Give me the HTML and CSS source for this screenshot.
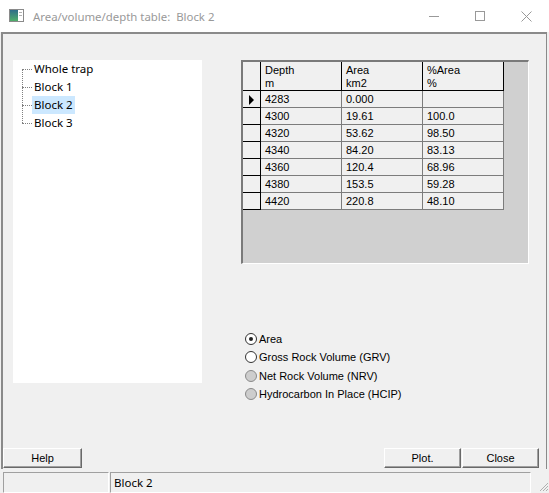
FILE: index.html
```html
<!DOCTYPE html>
<html lang="en">
<head>
    <meta charset="UTF-8">
    <title>Area/volume/depth table: Block 2</title>
    <link rel="stylesheet" href="styles.css">
</head>
<body>
    <div class="window">
        <div class="titlebar">
            <svg class="app-icon" width="15" height="13" viewBox="0 0 15 13">
                <defs>
                    <linearGradient id="ig" x1="0" y1="0" x2="0" y2="1">
                        <stop offset="0" stop-color="#2f6d8a"/>
                        <stop offset="1" stop-color="#4fae6a"/>
                    </linearGradient>
                </defs>
                <rect x="0.5" y="0.5" width="14" height="12" fill="#fff" stroke="#8a8a8a"/>
                <rect x="1" y="1" width="8" height="11" fill="url(#ig)"/>
                <rect x="10" y="3" width="3" height="1" fill="#b0b0b0"/>
                <rect x="10" y="6" width="3" height="1" fill="#b0b0b0"/>
            </svg>
            <span class="title">Area/volume/depth table:&nbsp; Block 2</span>
            <div class="controls">
                <div class="ctl"><svg width="10" height="10" viewBox="0 0 10 10"><path d="M0 5.5H10" stroke="#999" stroke-width="1"/></svg></div>
                <div class="ctl"><svg width="10" height="10" viewBox="0 0 10 10"><rect x="0.5" y="0.5" width="9" height="9" fill="none" stroke="#999"/></svg></div>
                <div class="ctl"><svg width="11" height="11" viewBox="0 0 11 11"><path d="M0.5 0.5L10.5 10.5M10.5 0.5L0.5 10.5" stroke="#999" stroke-width="1"/></svg></div>
            </div>
        </div>

        <div class="form">
            <div class="main">
                <div class="tree">
                    <div class="tree-lines"></div>
                    <div class="tree-item"><span class="label">Whole trap</span></div>
                    <div class="tree-item"><span class="label">Block 1</span></div>
                    <div class="tree-item selected"><span class="label">Block 2</span></div>
                    <div class="tree-item"><span class="label">Block 3</span></div>
                </div>

                <div class="right">
                    <div class="grid">
                        <table class="table">
                            <colgroup>
                                <col style="width:18px">
                                <col style="width:81px">
                                <col style="width:81px">
                                <col style="width:81px">
                            </colgroup>
                            <tr class="head">
                                <td class="fixed"></td>
                                <td class="fixed">Depth<br>m</td>
                                <td class="fixed">Area<br>km2</td>
                                <td class="fixed">%Area<br>%</td>
                            </tr>
                            <tr><td class="fixed"><span class="pointer"></span></td><td>4283</td><td>0.000</td><td></td></tr>
                            <tr><td class="fixed"></td><td>4300</td><td>19.61</td><td>100.0</td></tr>
                            <tr><td class="fixed"></td><td>4320</td><td>53.62</td><td>98.50</td></tr>
                            <tr><td class="fixed"></td><td>4340</td><td>84.20</td><td>83.13</td></tr>
                            <tr><td class="fixed"></td><td>4360</td><td>120.4</td><td>68.96</td></tr>
                            <tr><td class="fixed"></td><td>4380</td><td>153.5</td><td>59.28</td></tr>
                            <tr><td class="fixed"></td><td>4420</td><td>220.8</td><td>48.10</td></tr>
                        </table>
                    </div>

                    <div class="options">
                        <div class="opt"><span class="radio on"></span>Area</div>
                        <div class="opt"><span class="radio"></span>Gross Rock Volume (GRV)</div>
                        <div class="opt"><span class="radio off"></span>Net Rock Volume (NRV)</div>
                        <div class="opt"><span class="radio off"></span>Hydrocarbon In Place (HCIP)</div>
                    </div>
                </div>
            </div>

            <div class="buttons">
                <button class="btn btn-help">Help</button>
                <div class="spacer"></div>
                <button class="btn">Plot.</button>
                <button class="btn">Close</button>
            </div>
        </div>

        <div class="statusbar">
            <div class="panel panel-first"></div>
            <div class="panel panel-text">Block 2</div>
            <svg class="grip" width="11" height="11" viewBox="0 0 11 11">
                <path d="M10 2L2 10M10 5L5 10M10 8L8 10" stroke="#b0b0b0" stroke-width="1"/>
            </svg>
        </div>
    </div>
</body>
</html>
```

FILE: styles.css
```css
body {
    margin: 0;
    width: 549px;
    height: 493px;
    overflow: hidden;
    background-color: #f0f0f0;
    font-family: "Liberation Sans", Arial, sans-serif;
    font-size: 11px;
    color: #000;
}
.window {
    height: 493px;
    display: flex;
    flex-direction: column;
}
.titlebar {
    height: 32px;
    flex-shrink: 0;
    background-color: #fff;
    display: flex;
    align-items: center;
}
.app-icon {
    margin-left: 9px;
    margin-top: -1px;
}
.title {
    flex: 1;
    margin-left: 9px;
    font-family: "Noto Sans", sans-serif;
    font-size: 11.4px;
    color: #999;
}
.controls {
    display: flex;
    height: 32px;
}
.ctl {
    width: 46px;
    height: 32px;
    display: flex;
    align-items: center;
    justify-content: center;
}

/* dialog body */
.form {
    flex: 1;
    margin: 0 2px 0 1px;
    border-top: 2px solid #8a8a8a;
    border-left: 2px solid #8a8a8a;
    border-right: 1px solid #8a8a8a;
    display: flex;
    flex-direction: column;
}
.main {
    display: flex;
    padding: 26px 0 0 10px;
}
.tree {
    position: relative;
    width: 189px;
    height: 323px;
    background-color: #fff;
    font-family: "Noto Sans", sans-serif;
    font-size: 11.5px;
}
.tree-lines {
    position: absolute;
    left: 9px;
    top: 9px;
    height: 54px;
    border-left: 1px dotted #808080;
}
.tree-item {
    position: relative;
    height: 18px;
    line-height: 18px;
    padding-left: 19px;
}
.tree-item::before {
    content: "";
    position: absolute;
    left: 9px;
    top: 9px;
    width: 10px;
    border-top: 1px dotted #808080;
}
.label {
    display: inline-block;
    padding: 0 2px;
}
.selected .label {
    background-color: #cce8ff;
}

.right {
    margin-left: 39px;
}
.grid {
    width: 288px;
    height: 204px;
    box-sizing: border-box;
    border-style: solid;
    border-width: 2px 1px 1px 2px;
    border-color: #7a7a7a #fff #fff #7a7a7a;
    background-color: #d0d0d0;
}
.table {
    border-collapse: separate;
    border-spacing: 0;
    table-layout: fixed;
    width: 261px;
    background-color: #f0f0f0;
}
.table td {
    height: 17px;
    box-sizing: border-box;
    padding: 0 0 0 4px;
    border-right: 1px solid #7c7c7c;
    border-bottom: 1px solid #7c7c7c;
    white-space: nowrap;
    vertical-align: middle;
}
.table td.fixed {
    border-right-color: #000;
    border-bottom-color: #000;
}
.table .head td {
    height: 28px;
    padding-top: 2px;
    line-height: 13px;
    vertical-align: top;
}
.table td:first-child {
    padding: 0;
    text-align: center;
}
.pointer {
    display: inline-block;
    width: 0;
    height: 0;
    border-left: 5px solid #000;
    border-top: 5px solid transparent;
    border-bottom: 5px solid transparent;
    vertical-align: middle;
}

.options {
    margin: 66px 0 0 4px;
}
.opt {
    display: flex;
    align-items: center;
    height: 18.3px;
}
.radio {
    position: relative;
    width: 12px;
    height: 12px;
    box-sizing: border-box;
    margin-right: 2px;
    border: 1px solid #333;
    border-radius: 50%;
    background-color: #fff;
}
.radio.on::after {
    content: "";
    position: absolute;
    left: 3px;
    top: 3px;
    width: 4px;
    height: 4px;
    border-radius: 50%;
    background-color: #222;
}
.radio.off {
    border-color: #8a8a8a;
    background-color: #cdcdcd;
}

.buttons {
    margin-top: auto;
    margin-bottom: 1px;
    margin-right: 7px;
    display: flex;
    gap: 1px;
}
.spacer {
    flex: 1;
}
.btn {
    width: 77px;
    height: 20px;
    box-sizing: border-box;
    padding: 0;
    border: 1px solid;
    border-color: #fff #696969 #696969 #fff;
    box-shadow: inset -1px -1px #a0a0a0;
    background-color: #f0f0f0;
    font-family: "Liberation Sans", Arial, sans-serif;
    font-size: 11px;
    color: #000;
}
.btn-help {
    width: 79px;
}

.statusbar {
    height: 24px;
    flex-shrink: 0;
    display: flex;
    align-items: flex-end;
    padding-left: 3px;
}
.panel {
    height: 21px;
    box-sizing: border-box;
    border-style: solid;
    border-width: 1px;
    border-color: #a0a0a0 #fff #fff #a0a0a0;
    font-family: "Noto Sans", sans-serif;
    font-size: 11.5px;
    line-height: 19px;
}
.panel-first {
    width: 106px;
    margin-right: 1px;
}
.panel-text {
    width: 421px;
    padding-left: 3px;
}
.grip {
    margin: 0 0 1px 7px;
}
```
